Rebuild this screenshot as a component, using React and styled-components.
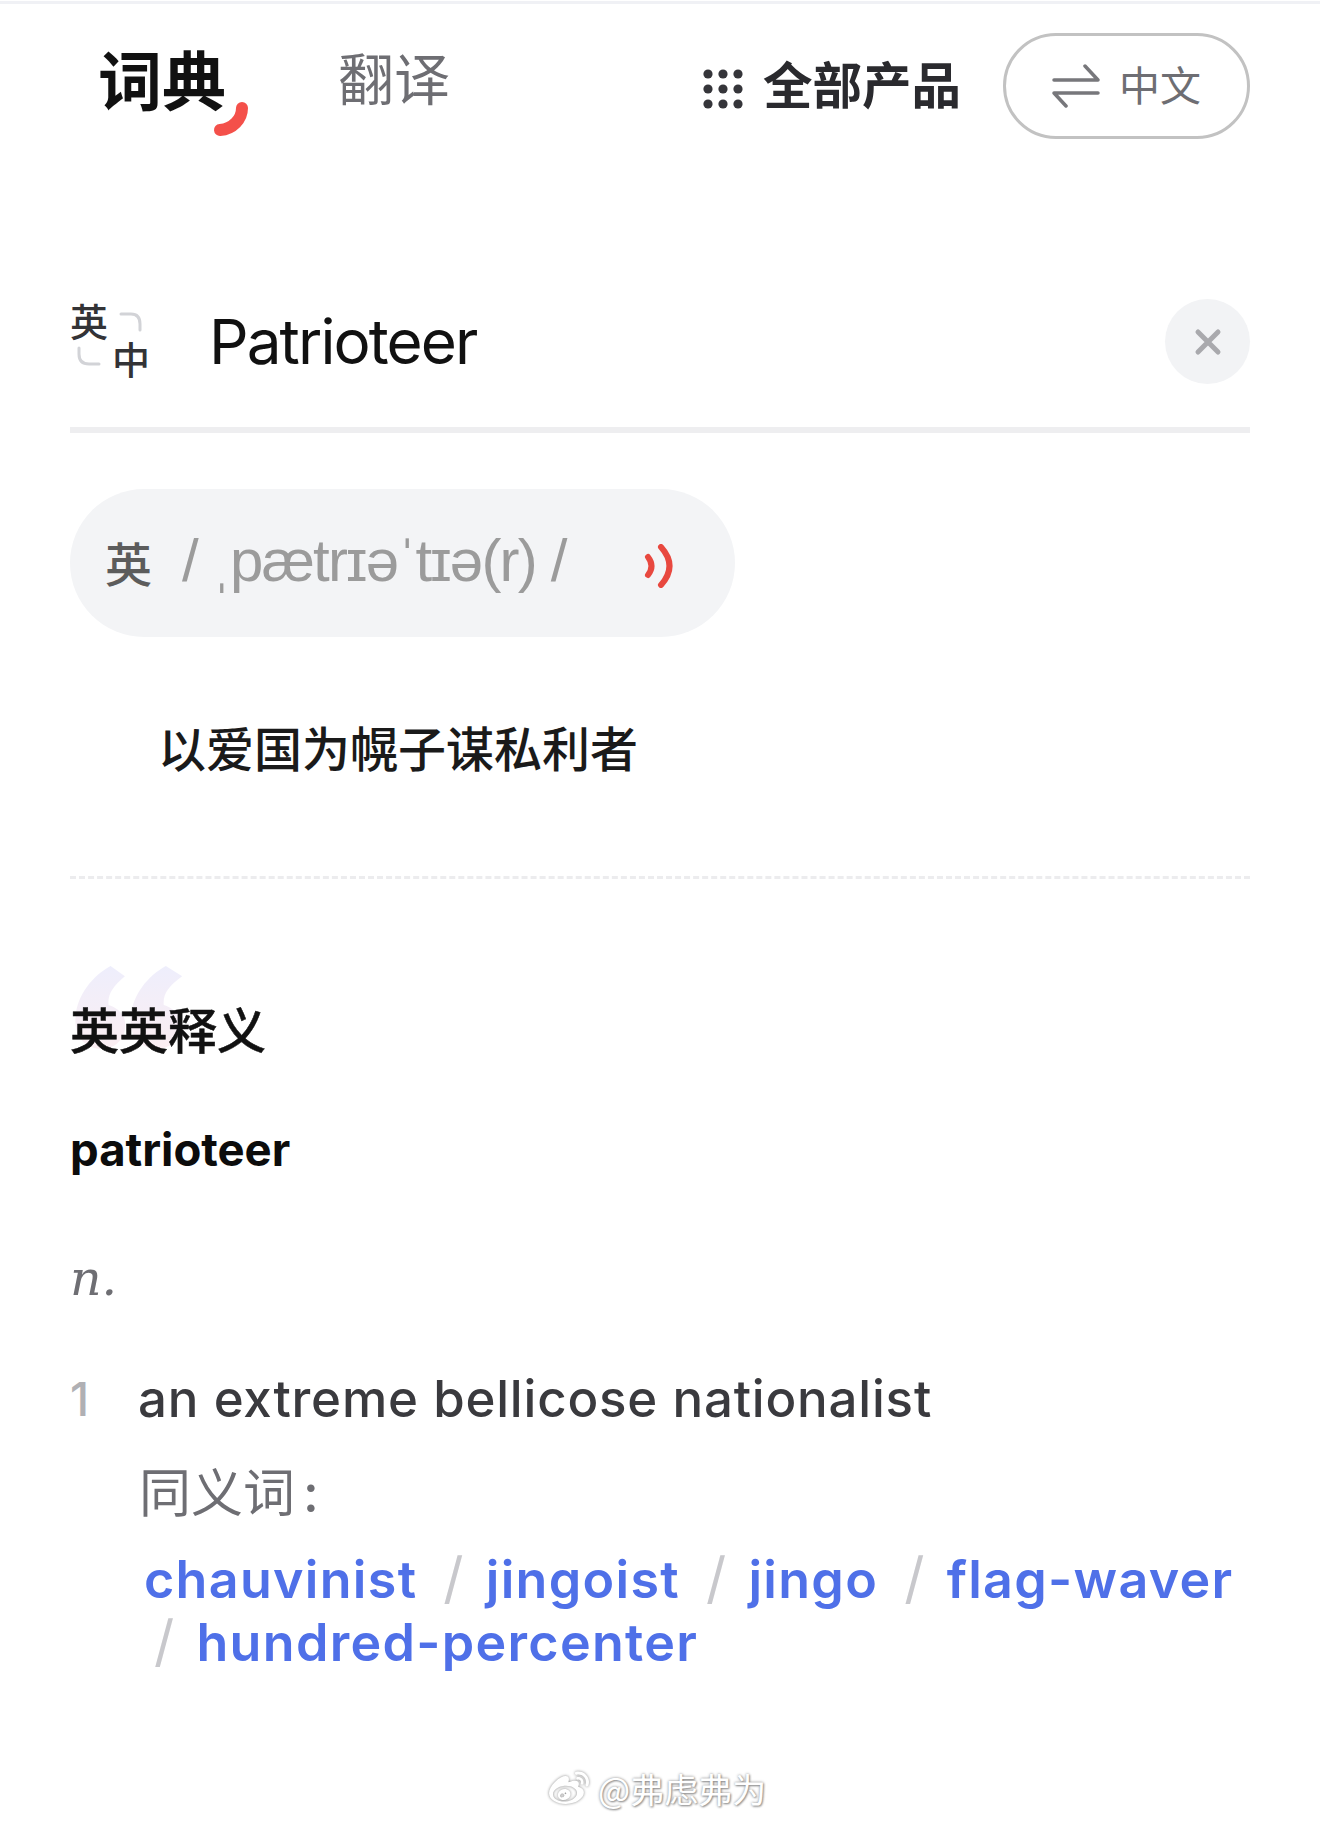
import React from 'react';
import styled, { createGlobalStyle } from 'styled-components';
import { FaWeibo } from 'react-icons/fa';

const CJK = '"Noto Sans CJK SC", "Noto Sans", sans-serif';
const LATIN = 'Inter, "Noto Sans CJK SC", sans-serif';

const Global = createGlobalStyle`
  html, body { margin: 0; padding: 0; background: #fff; }
  body { font-family: ${CJK}; }
`;

const Page = styled.div`
  position: relative;
  width: 1320px;
  height: 1822px;
  overflow: hidden;
  background: #fff;
`;
const TopLine = styled.div`
  margin-top: 1px;
  height: 3px;
  background: #f0f1f5;
`;
const Content = styled.main`
  padding: 0 70px;
  display: flex;
  flex-direction: column;
`;
const Header = styled.header`
  margin-top: 29px;
  height: 105px;
  display: flex;
  align-items: center;
`;
const Tabs = styled.nav`
  display: flex;
  align-items: center;
  padding: 0 0 17px 28px;
`;
const ActiveTab = styled.span`
  position: relative;
  font-size: 64px;
  line-height: 70px;
  font-weight: 700;
  color: #111;
`;
const Swoosh = styled.svg`
  position: absolute;
  left: 115px;
  top: 59px;
  width: 36px;
  height: 36px;
`;
const Tab = styled.span`
  margin: 0 0 3px 112px;
  font-size: 56px;
  line-height: 70px;
  font-weight: 400;
  color: #6e6e73;
`;
const Products = styled.div`
  margin-left: auto;
  display: flex;
  align-items: center;
  gap: 20px;
  font-size: 49.5px;
  line-height: 60px;
  font-weight: 700;
  color: #2a2a2e;
`;
const DotsIcon = styled.svg`
  margin-top: 7px;
  width: 40px;
  height: 40px;
`;
const ProductLabel = styled.span`
  margin-bottom: 5px;
`;
const LangButton = styled.button`
  margin-left: 42px;
  width: 247px;
  height: 106px;
  box-sizing: border-box;
  border: 3px solid #c2c2c2;
  border-radius: 53px;
  background: #fff;
  display: flex;
  align-items: center;
  justify-content: center;
  gap: 19px;
  padding: 0;
  font-family: ${CJK};
  font-size: 41px;
  color: #6e6e73;
`;
const LangLabel = styled.span`
  margin-bottom: 5px;
`;
const SearchRow = styled.div`
  margin-top: 161px;
  height: 85px;
  display: flex;
  align-items: center;
`;
const LangIcon = styled.div`
  width: 80px;
  margin-top: -3px;
  display: grid;
  grid-template-columns: 44px 36px;
  grid-template-rows: 36px 36px;
  font-size: 38px;
  line-height: 36px;
  font-weight: 500;
  color: #333336;
`;
const UpperGlyph = styled.span`
  margin-top: -2px;
`;
const LowerGlyph = styled.span`
  margin-left: -2px;
`;
const Corner = styled.svg`
  width: 24px;
  height: 20px;
  margin-left: ${p => p.$left || 0}px;
  margin-top: ${p => p.$top || 0}px;
`;
const SearchText = styled.div`
  margin-left: 59px;
  font-family: ${LATIN};
  font-size: 62px;
  letter-spacing: -1.9px;
  line-height: 85px;
  color: #111;
`;
const ClearButton = styled.div`
  margin-left: auto;
  width: 85px;
  height: 85px;
  border-radius: 50%;
  background: #f2f3f5;
  display: flex;
  align-items: center;
  justify-content: center;
`;
const Divider = styled.div`
  margin-top: 43px;
  height: 6px;
  background: #eeeef0;
`;
const Phonetic = styled.div`
  margin-top: 56px;
  width: 665px;
  height: 148px;
  box-sizing: border-box;
  border-radius: 74px;
  background: #f3f4f6;
  padding-left: 35px;
  display: flex;
  align-items: center;
  color: #9b9b9b;
`;
const PhoneticLang = styled.span`
  margin-bottom: 4px;
  font-size: 47px;
  font-weight: 500;
  color: #5c5c5c;
`;
const Ipa = styled.span`
  margin: 0 0 6px 30px;
  font-family: "Liberation Sans", sans-serif;
  font-size: 60px;
  letter-spacing: -1.8px;
  white-space: pre;
`;
const SpeakerIcon = styled.svg`
  margin: 6px 0 0 78px;
  width: 32px;
  height: 44px;
`;
const Meaning = styled.div`
  margin-top: 79px;
  padding-left: 88px;
  font-size: 48px;
  line-height: 60px;
  font-weight: 500;
  color: #1a1a1a;
`;
const Dashed = styled.div`
  margin-top: 100px;
  border-top: 3px dashed #ececee;
`;
const SectionTitle = styled.h2`
  position: relative;
  margin: 119px 0 0;
  font-size: 49px;
  line-height: 60px;
  font-weight: 500;
  -webkit-text-stroke: 0.5px #111;
  color: #111;
`;
const TitleText = styled.span`
  position: relative;
`;
const QuoteMark = styled.svg`
  position: absolute;
  left: 3px;
  top: -34px;
  width: 114px;
  height: 88px;
`;
const Word = styled.div`
  margin-top: 62px;
  font-family: ${LATIN};
  font-size: 45.5px;
  line-height: 60px;
  font-weight: 700;
  color: #0c0c0c;
`;
const Pos = styled.div`
  margin-top: 69px;
  font-family: "DejaVu Serif", serif;
  font-style: italic;
  font-size: 49px;
  line-height: 60px;
  color: #6e6e73;
`;
const DefRow = styled.div`
  margin-top: 60px;
  display: flex;
  font-family: ${LATIN};
  line-height: 60px;
`;
const DefNum = styled.span`
  width: 68px;
  font-size: 46px;
  font-weight: 500;
  color: #b0b0b4;
`;
const DefText = styled.span`
  font-size: 51px;
  letter-spacing: 0.8px;
  font-weight: 500;
  color: #3a3a3e;
`;
const SynLabel = styled.div`
  margin-top: 31px;
  padding-left: 69px;
  font-size: 52px;
  line-height: 60px;
  color: #6e6e73;
`;
const Colon = styled.span`
  margin-left: 8px;
  font-family: ${LATIN};
  font-weight: 500;
`;
const SynList = styled.div`
  margin: 24px 0 0 74px;
  display: flex;
  flex-wrap: wrap;
  column-gap: 16px;
  font-family: ${LATIN};
  font-size: 52px;
  letter-spacing: 1.3px;
  line-height: 63px;
  font-weight: 600;
  color: #4f70e8;
`;
const Syn = styled.span`
  white-space: nowrap;
`;
const Slash = styled.span`
  margin: 0 21px 0 10px;
  font-size: 56px;
  line-height: 0;
  font-weight: 400;
  color: #c8c8cc;
`;
const Watermark = styled.div`
  position: absolute;
  left: 546px;
  top: 1766px;
  display: flex;
  align-items: center;
  gap: 6px;
  font-size: 34px;
  line-height: 46px;
  color: #fff;
  text-shadow: 0 0 3px #8a8a8a, 1px 1px 2px #969696;
`;
const WeiboIcon = styled(FaWeibo)`
  width: 46px;
  height: 40px;
  color: #fff;
  filter: drop-shadow(0 0 1.5px #8a8a8a);
`;

const synonyms = ['chauvinist', 'jingoist', 'jingo', 'flag-waver', 'hundred-percenter'];

export default function App() {
  return (
    <Page>
      <Global />
      <TopLine />
      <Content>
        <Header>
          <Tabs>
            <ActiveTab>
              词典
              <Swoosh viewBox="0 0 36 36">
                <path d="M29 7 C29 18 20 28 7 29" fill="none" stroke="#f4504a" strokeWidth="12" strokeLinecap="round" />
              </Swoosh>
            </ActiveTab>
            <Tab>翻译</Tab>
          </Tabs>
          <Products>
            <DotsIcon viewBox="0 0 40 40" fill="#35353a">
              {[5, 20, 35].map(y => [5, 20, 35].map(x => <circle key={`${x}-${y}`} cx={x} cy={y} r="4.6" />))}
            </DotsIcon>
            <ProductLabel>全部产品</ProductLabel>
          </Products>
          <LangButton>
            <svg width="48" height="44" viewBox="0 0 48 44" fill="none" stroke="#77777b" strokeWidth="3.5" strokeLinecap="round" strokeLinejoin="round">
              <path d="M2 16 H46 L33 2" />
              <path d="M46 29 H2 L14 42" />
            </svg>
            <LangLabel>中文</LangLabel>
          </LangButton>
        </Header>

        <SearchRow>
          <LangIcon>
            <UpperGlyph>英</UpperGlyph>
            <Corner $left={5} $top={8} viewBox="0 0 24 20" fill="none" stroke="#d2d3d7" strokeWidth="3" strokeLinecap="round">
              <path d="M2 2 H12 Q21 2 21 12 V18" />
            </Corner>
            <Corner $left={7} $top={6} viewBox="0 0 24 20" fill="none" stroke="#d2d3d7" strokeWidth="3" strokeLinecap="round">
              <path d="M2 2 V8 Q2 18 12 18 H22" />
            </Corner>
            <LowerGlyph>中</LowerGlyph>
          </LangIcon>
          <SearchText>Patrioteer</SearchText>
          <ClearButton>
            <svg width="28" height="28" viewBox="0 0 28 28" stroke="#a9a9ad" strokeWidth="5" strokeLinecap="round">
              <path d="M4 4 L24 24 M24 4 L4 24" />
            </svg>
          </ClearButton>
        </SearchRow>
        <Divider />

        <Phonetic>
          <PhoneticLang>英</PhoneticLang>
          <Ipa>/ ˌpætrɪəˈtɪə(r) /</Ipa>
          <SpeakerIcon viewBox="0 0 32 44" fill="none" stroke="#e8483f" strokeWidth="6" strokeLinecap="round">
            <path d="M4 13 Q11 22 4 31" />
            <path d="M17 3 Q34 22 17 41" />
          </SpeakerIcon>
        </Phonetic>

        <Meaning>以爱国为幌子谋私利者</Meaning>
        <Dashed />

        <SectionTitle>
          <QuoteMark viewBox="0 0 110 86">
            <defs>
              <linearGradient id="quoteFill" x1="0" y1="0" x2="0" y2="1">
                <stop offset="0" stopColor="#eeeefc" />
                <stop offset="1" stopColor="#fbeef2" />
              </linearGradient>
            </defs>
            <path fill="url(#quoteFill)" strokeWidth="0" d="M36 2 L50 12 C38 22 33 30 34 40 C46 44 52 52 50 64 C48 78 34 86 20 82 C6 78 0 66 2 50 C4 30 18 12 36 2 Z M90 2 L106 12 C92 22 87 30 88 40 C100 44 106 52 104 64 C102 78 88 86 74 82 C60 78 54 66 56 50 C58 30 72 12 90 2 Z" />
          </QuoteMark>
          <TitleText>英英释义</TitleText>
        </SectionTitle>
        <Word>patrioteer</Word>
        <Pos>n.</Pos>
        <DefRow>
          <DefNum>1</DefNum>
          <DefText>an extreme bellicose nationalist</DefText>
        </DefRow>
        <SynLabel>同义词<Colon>:</Colon></SynLabel>
        <SynList>
          {synonyms.map((s, i) => (
            <Syn key={s}>
              {i > 0 && <Slash>/</Slash>}
              {s}
            </Syn>
          ))}
        </SynList>
      </Content>
      <Watermark>
        <WeiboIcon />
        @弗虑弗为
      </Watermark>
    </Page>
  );
}
